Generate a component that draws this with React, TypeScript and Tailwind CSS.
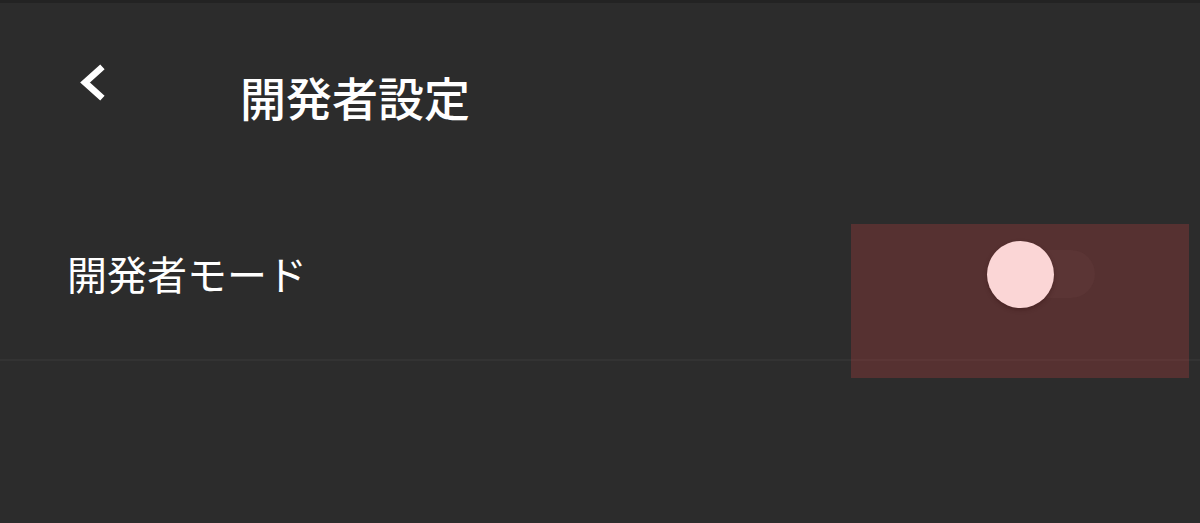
import React from "react";

const FONT = { fontFamily: '"Noto Sans CJK JP", "Noto Sans", sans-serif' };

export default function App() {
  return (
    <main className="relative w-[1200px] h-[523px] overflow-hidden bg-[#2c2c2c] text-white" style={FONT}>
      <div className="h-[3px] bg-[#232323]" />

      {/* ヘッダー */}
      <header className="flex h-[160px]">
        <button className="mt-[57px] ml-[70px] w-[40px] h-[45px]">
          <svg width="40" height="45" viewBox="0 0 40 45" fill="none" stroke="white" strokeWidth="6.5" strokeLinecap="square">
            <path d="M30 9 L15 22.5 L30 36" />
          </svg>
        </button>
        <h1 className="mt-[70px] ml-[130px] text-[46px] leading-none font-medium">開発者設定</h1>
      </header>

      {/* 開発者モード */}
      <div className="flex items-start justify-between h-[198px] pl-[67px] pr-[104px] border-b-2 border-[#333333]">
        <span className="mt-[90px] text-[40px] leading-none">開発者モード</span>
        <div className="relative mt-[87px] w-[96px] h-[48px] rounded-full bg-[#323131] mr-[1px]">
          <span className="absolute -left-[12px] -top-[9px] w-[67px] h-[67px] rounded-full bg-white shadow-[0_2px_4px_rgba(0,0,0,0.4)]" />
        </div>
      </div>

      {/* overlay */}
      <div className="absolute left-[851px] top-[224px] w-[338px] h-[154px] bg-[rgba(239,67,67,0.22)] pointer-events-none" />
    </main>
  );
}
